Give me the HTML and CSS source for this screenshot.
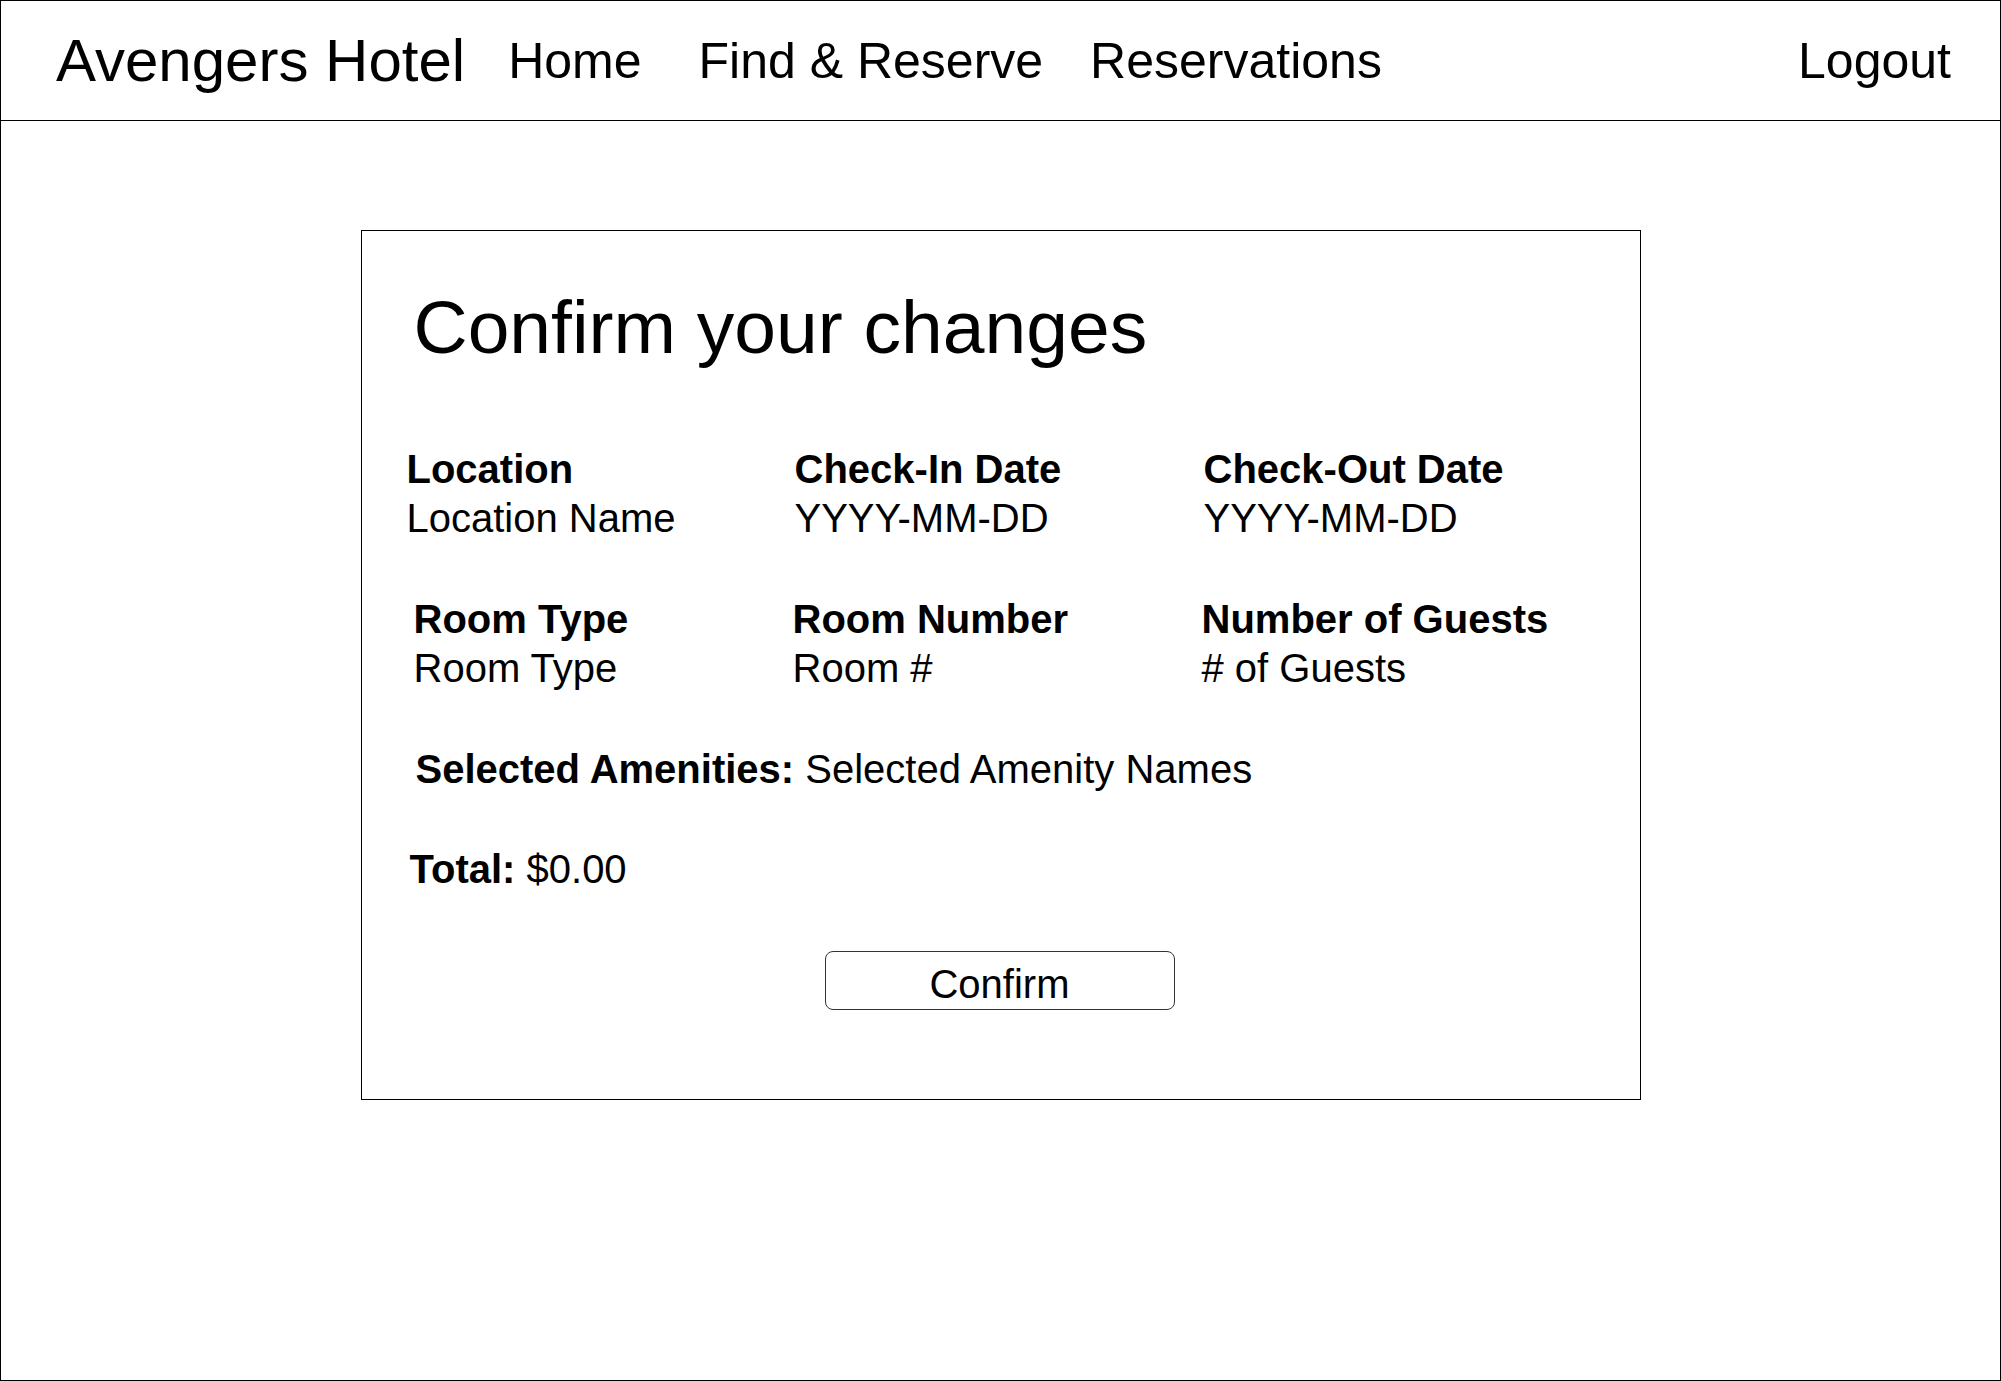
FILE: index.html
```html
<!DOCTYPE html>
<html lang="en">
<head>
<meta charset="utf-8">
<title>Avengers Hotel - Confirm your changes</title>
<link rel="stylesheet" href="styles.css">
</head>
<body>
<div class="page">
  <header class="topbar">
    <div class="brand">Avengers Hotel</div>
    <nav class="nav">
      <a class="nav-link nav-home" href="#">Home</a>
      <a class="nav-link nav-find" href="#">Find &amp; Reserve</a>
      <a class="nav-link" href="#">Reservations</a>
    </nav>
    <a class="logout" href="#">Logout</a>
  </header>

  <main class="card">
    <h1 class="title">Confirm your changes</h1>

    <div class="row row-one">
      <div class="field">
        <div class="label">Location</div>
        <div class="value">Location Name</div>
      </div>
      <div class="field">
        <div class="label">Check-In Date</div>
        <div class="value">YYYY-MM-DD</div>
      </div>
      <div class="field">
        <div class="label">Check-Out Date</div>
        <div class="value">YYYY-MM-DD</div>
      </div>
    </div>

    <div class="row row-two">
      <div class="field">
        <div class="label">Room Type</div>
        <div class="value">Room Type</div>
      </div>
      <div class="field">
        <div class="label">Room Number</div>
        <div class="value">Room #</div>
      </div>
      <div class="field">
        <div class="label">Number of Guests</div>
        <div class="value"># of Guests</div>
      </div>
    </div>

    <div class="line amenities"><span class="label">Selected Amenities:</span> Selected Amenity Names</div>
    <div class="line total"><span class="label">Total:</span> $0.00</div>

    <button class="confirm" type="button">Confirm</button>
  </main>
</div>
</body>
</html>
```

FILE: styles.css
```css
html, body {
  margin: 0;
  padding: 0;
  background: #fff;
}

body {
  font-family: "Liberation Sans", Arial, sans-serif;
  color: #000;
}

.page {
  box-sizing: border-box;
  width: 2001px;
  height: 1381px;
  border: 1px solid #000;
  overflow: hidden;
}

/* Header */
.topbar {
  box-sizing: border-box;
  height: 120px;
  border-bottom: 1px solid #000;
  display: flex;
  align-items: center;
  padding: 0 49px 0 55px;
}

.brand {
  font-size: 60px;
  margin-right: 43px;
  white-space: nowrap;
}

.nav {
  display: flex;
  align-items: center;
}

.nav-link,
.logout {
  font-size: 50px;
  color: #000;
  text-decoration: none;
  white-space: nowrap;
}

.nav-home {
  margin-right: 57px;
}

.nav-find {
  margin-right: 47px;
}

.logout {
  margin-left: auto;
}

/* Card */
.card {
  box-sizing: border-box;
  display: block;
  width: 1280px;
  height: 870px;
  margin: 109px auto 0;
  border: 1px solid #000;
  padding: 59px 0 0 45px;
}

.title {
  margin: 0 0 0 7px;
  font-size: 75px;
  font-weight: normal;
  line-height: 75px;
}

.row {
  display: grid;
  font-size: 40px;
  line-height: 49px;
}

.row-one {
  margin-top: 80px;
  grid-template-columns: 388px 409px 1fr;
}

.row-two {
  margin-top: 52px;
  margin-left: 7px;
  grid-template-columns: 379px 409px 1fr;
}

.label {
  font-weight: bold;
}

.line {
  font-size: 40px;
  line-height: 49px;
}

.amenities {
  margin-top: 52px;
  margin-left: 9px;
}

.total {
  margin-top: 51px;
  margin-left: 3px;
}

.confirm {
  box-sizing: border-box;
  display: block;
  width: 350px;
  height: 59px;
  margin: 57px 0 0 418px;
  padding: 7px 0 0;
  border: 1px solid #333;
  border-radius: 8px;
  background: #fff;
  color: #000;
  font-family: "Liberation Sans", Arial, sans-serif;
  font-size: 40px;
  line-height: 50px;
  text-align: center;
  vertical-align: top;
}
```
